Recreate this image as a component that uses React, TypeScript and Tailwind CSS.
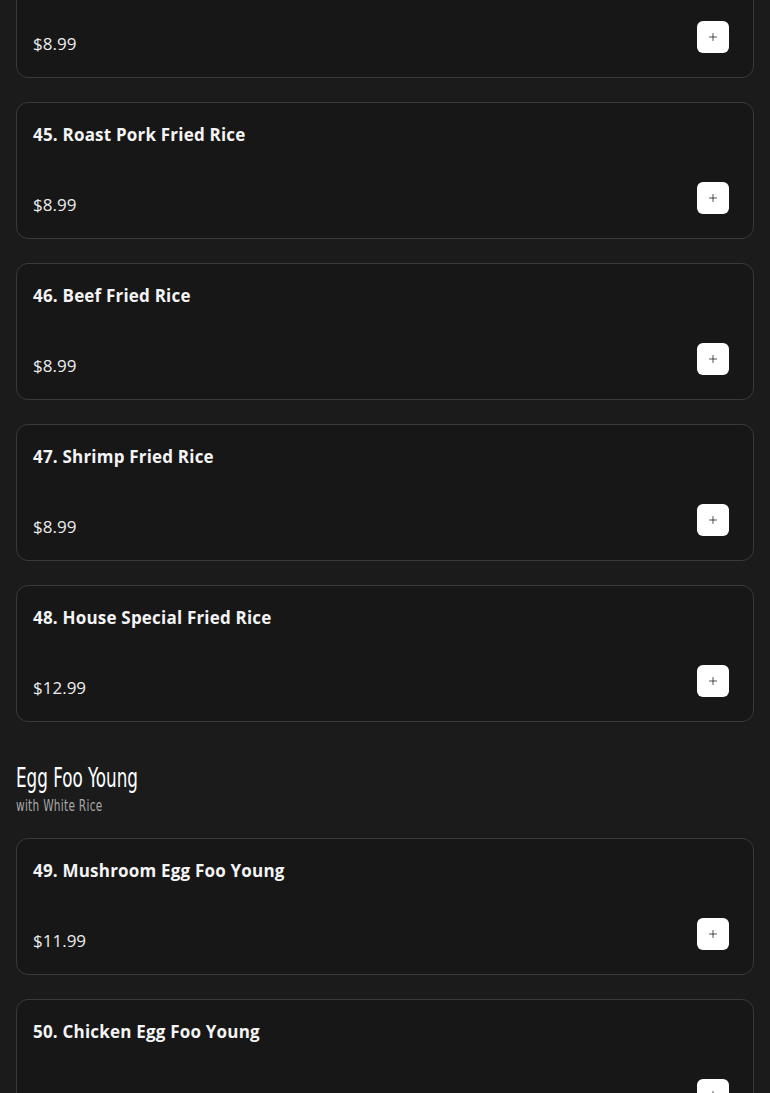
import { Plus } from "lucide-react"

type Item = { title: string; price: string }

const friedRice: Item[] = [
  { title: "44. Chicken Fried Rice", price: "$8.99" },
  { title: "45. Roast Pork Fried Rice", price: "$8.99" },
  { title: "46. Beef Fried Rice", price: "$8.99" },
  { title: "47. Shrimp Fried Rice", price: "$8.99" },
  { title: "48. House Special Fried Rice", price: "$12.99" },
]

const eggFooYoung: Item[] = [
  { title: "49. Mushroom Egg Foo Young", price: "$11.99" },
  { title: "50. Chicken Egg Foo Young", price: "$11.99" },
]

function MenuCard({ item }: { item: Item }) {
  return (
    <div className="rounded-xl border border-[#3a3a3a] bg-[#171717] pt-4 pb-6 pl-4 pr-6">
      <h3 className="text-[17px] leading-8 font-bold text-[#f4f4f4] tracking-[0.2px]">{item.title}</h3>
      <div className="mt-[31px] flex items-end justify-between">
        <span className="text-[17px] leading-[18px] text-[#ececec]">{item.price}</span>
        <button
          type="button"
          className="flex h-8 w-8 items-center justify-center rounded-md bg-white text-[#222]"
          aria-label={`Add ${item.title}`}
        >
          <Plus className="h-3 w-3" strokeWidth={1.6} />
        </button>
      </div>
    </div>
  )
}

export default function App() {
  return (
    <div
      className="min-h-screen bg-[#1b1b1b] px-4 overflow-hidden"
      style={{ fontFamily: '"Open Sans", "Liberation Sans", sans-serif' }}
    >
      <div className="-mt-[59px] flex flex-col gap-6">
        {friedRice.map((item) => (
          <MenuCard key={item.title} item={item} />
        ))}
      </div>

      <header
        className="mt-[38px] mb-[22px]"
        style={{ fontFamily: '"DejaVu Sans Condensed", "DejaVu Sans", sans-serif' }}
      >
        <h2 className="origin-left scale-x-[0.69] text-[27px] leading-9 text-white whitespace-nowrap">
          Egg Foo Young
        </h2>
        <p className="origin-left scale-x-[0.78] text-[15px] leading-5 text-[#a8a8a8] tracking-wide whitespace-nowrap">
          with White Rice
        </p>
      </header>

      <div className="flex flex-col gap-6 pb-10">
        {eggFooYoung.map((item) => (
          <MenuCard key={item.title} item={item} />
        ))}
      </div>
    </div>
  )
}
